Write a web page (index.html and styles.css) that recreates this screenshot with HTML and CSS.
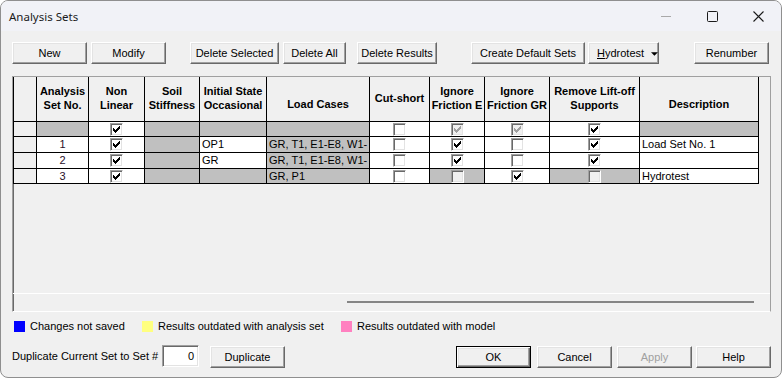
FILE: index.html
```html
<!DOCTYPE html>
<html>
<head>
<meta charset="utf-8">
<title>Analysis Sets</title>
<link rel="stylesheet" href="styles.css">
</head>
<body>
<div class="window">
  <div class="titlebar">
    <span class="title">Analysis Sets</span>
    <div class="controls">
      <span class="ctl"><svg width="10" height="10" viewBox="0 0 10 10"><path d="M0 5.5h10" stroke="#a9a9a9" stroke-width="1"/></svg></span>
      <span class="ctl"><svg width="11" height="11" viewBox="0 0 11 11"><rect x="0.5" y="0.5" width="10" height="10" rx="1" fill="none" stroke="#1b1b1b" stroke-width="1"/></svg></span>
      <span class="ctl"><svg width="11" height="11" viewBox="0 0 11 11"><path d="M0.5 0.5L10.5 10.5M10.5 0.5L0.5 10.5" stroke="#1b1b1b" stroke-width="1.1"/></svg></span>
    </div>
  </div>
  <div class="content">
    <div class="toolbar">
      <button class="btn w75">New</button>
      <button class="btn w75 ml4">Modify</button>
      <button class="btn w89 ml24">Delete Selected</button>
      <button class="btn w63 ml4">Delete All</button>
      <button class="btn w80 ml11">Delete Results</button>
      <button class="btn w114 ml34">Create Default Sets</button>
      <button class="btn w71 ml3 drop"><span><u>H</u>ydrotest</span><svg width="8" height="4" viewBox="0 0 8 4"><path d="M0 0h8L4 4z" fill="#000"/></svg></button>
      <button class="btn w75 ml35">Renumber</button>
    </div>

    <div class="frame">
      <div class="grid">
        <div class="row head">
          <div class="cell c0"></div>
          <div class="cell c1">Analysis<br>Set No.</div>
          <div class="cell c2">Non<br>Linear</div>
          <div class="cell c3">Soil<br>Stiffness</div>
          <div class="cell c4">Initial State<br>Occasional</div>
          <div class="cell c5 low">Load Cases</div>
          <div class="cell c6">Cut-short</div>
          <div class="cell c7">Ignore<br>Friction E</div>
          <div class="cell c8">Ignore<br>Friction GR</div>
          <div class="cell c9">Remove Lift-off<br>Supports</div>
          <div class="cell c10 low">Description</div>
        </div>

        <div class="row r15">
          <div class="cell c0 h"></div>
          <div class="cell c1 g"></div>
          <div class="cell c2 w ctr"><span class="cb"><svg width="11" height="11" viewBox="0 0 11 11"><path transform="translate(2 2)" d="M6 0h1v1h-1zM5 1h2v1h-2zM0 2h1v1h-1zM4 2h3v1h-3zM0 3h2v1h-2zM3 3h3v1h-3zM0 4h5v1h-5zM1 5h3v1h-3zM2 6h1v1h-1z"/></svg></span></div>
          <div class="cell c3 g"></div>
          <div class="cell c4 g"></div>
          <div class="cell c5 g"></div>
          <div class="cell c6 w ctr"><span class="cb"></span></div>
          <div class="cell c7 w ctr"><span class="cb dis"><svg width="11" height="11" viewBox="0 0 11 11"><path transform="translate(2 2)" d="M6 0h1v1h-1zM5 1h2v1h-2zM0 2h1v1h-1zM4 2h3v1h-3zM0 3h2v1h-2zM3 3h3v1h-3zM0 4h5v1h-5zM1 5h3v1h-3zM2 6h1v1h-1z"/></svg></span></div>
          <div class="cell c8 w ctr"><span class="cb dis"><svg width="11" height="11" viewBox="0 0 11 11"><path transform="translate(2 2)" d="M6 0h1v1h-1zM5 1h2v1h-2zM0 2h1v1h-1zM4 2h3v1h-3zM0 3h2v1h-2zM3 3h3v1h-3zM0 4h5v1h-5zM1 5h3v1h-3zM2 6h1v1h-1z"/></svg></span></div>
          <div class="cell c9 w ctr"><span class="cb"><svg width="11" height="11" viewBox="0 0 11 11"><path transform="translate(2 2)" d="M6 0h1v1h-1zM5 1h2v1h-2zM0 2h1v1h-1zM4 2h3v1h-3zM0 3h2v1h-2zM3 3h3v1h-3zM0 4h5v1h-5zM1 5h3v1h-3zM2 6h1v1h-1z"/></svg></span></div>
          <div class="cell c10 g"></div>
        </div>

        <div class="row r16">
          <div class="cell c0 h"></div>
          <div class="cell c1 w num">1</div>
          <div class="cell c2 w ctr"><span class="cb"><svg width="11" height="11" viewBox="0 0 11 11"><path transform="translate(2 2)" d="M6 0h1v1h-1zM5 1h2v1h-2zM0 2h1v1h-1zM4 2h3v1h-3zM0 3h2v1h-2zM3 3h3v1h-3zM0 4h5v1h-5zM1 5h3v1h-3zM2 6h1v1h-1z"/></svg></span></div>
          <div class="cell c3 g"></div>
          <div class="cell c4 w txt">OP1</div>
          <div class="cell c5 g txt">GR, T1, E1-E8, W1-</div>
          <div class="cell c6 w ctr"><span class="cb"></span></div>
          <div class="cell c7 w ctr"><span class="cb"><svg width="11" height="11" viewBox="0 0 11 11"><path transform="translate(2 2)" d="M6 0h1v1h-1zM5 1h2v1h-2zM0 2h1v1h-1zM4 2h3v1h-3zM0 3h2v1h-2zM3 3h3v1h-3zM0 4h5v1h-5zM1 5h3v1h-3zM2 6h1v1h-1z"/></svg></span></div>
          <div class="cell c8 w ctr"><span class="cb"></span></div>
          <div class="cell c9 w ctr"><span class="cb"><svg width="11" height="11" viewBox="0 0 11 11"><path transform="translate(2 2)" d="M6 0h1v1h-1zM5 1h2v1h-2zM0 2h1v1h-1zM4 2h3v1h-3zM0 3h2v1h-2zM3 3h3v1h-3zM0 4h5v1h-5zM1 5h3v1h-3zM2 6h1v1h-1z"/></svg></span></div>
          <div class="cell c10 w txt">Load Set No. 1</div>
        </div>

        <div class="row r16">
          <div class="cell c0 h"></div>
          <div class="cell c1 w num">2</div>
          <div class="cell c2 w ctr"><span class="cb"><svg width="11" height="11" viewBox="0 0 11 11"><path transform="translate(2 2)" d="M6 0h1v1h-1zM5 1h2v1h-2zM0 2h1v1h-1zM4 2h3v1h-3zM0 3h2v1h-2zM3 3h3v1h-3zM0 4h5v1h-5zM1 5h3v1h-3zM2 6h1v1h-1z"/></svg></span></div>
          <div class="cell c3 g"></div>
          <div class="cell c4 w txt">GR</div>
          <div class="cell c5 g txt">GR, T1, E1-E8, W1-</div>
          <div class="cell c6 w ctr"><span class="cb"></span></div>
          <div class="cell c7 w ctr"><span class="cb"><svg width="11" height="11" viewBox="0 0 11 11"><path transform="translate(2 2)" d="M6 0h1v1h-1zM5 1h2v1h-2zM0 2h1v1h-1zM4 2h3v1h-3zM0 3h2v1h-2zM3 3h3v1h-3zM0 4h5v1h-5zM1 5h3v1h-3zM2 6h1v1h-1z"/></svg></span></div>
          <div class="cell c8 w ctr"><span class="cb"></span></div>
          <div class="cell c9 w ctr"><span class="cb"><svg width="11" height="11" viewBox="0 0 11 11"><path transform="translate(2 2)" d="M6 0h1v1h-1zM5 1h2v1h-2zM0 2h1v1h-1zM4 2h3v1h-3zM0 3h2v1h-2zM3 3h3v1h-3zM0 4h5v1h-5zM1 5h3v1h-3zM2 6h1v1h-1z"/></svg></span></div>
          <div class="cell c10 w txt"></div>
        </div>

        <div class="row r15">
          <div class="cell c0 h"></div>
          <div class="cell c1 w num">3</div>
          <div class="cell c2 w ctr"><span class="cb"><svg width="11" height="11" viewBox="0 0 11 11"><path transform="translate(2 2)" d="M6 0h1v1h-1zM5 1h2v1h-2zM0 2h1v1h-1zM4 2h3v1h-3zM0 3h2v1h-2zM3 3h3v1h-3zM0 4h5v1h-5zM1 5h3v1h-3zM2 6h1v1h-1z"/></svg></span></div>
          <div class="cell c3 g"></div>
          <div class="cell c4 g"></div>
          <div class="cell c5 g txt">GR, P1</div>
          <div class="cell c6 w ctr"><span class="cb"></span></div>
          <div class="cell c7 g ctr"><span class="cb dis"></span></div>
          <div class="cell c8 w ctr"><span class="cb"><svg width="11" height="11" viewBox="0 0 11 11"><path transform="translate(2 2)" d="M6 0h1v1h-1zM5 1h2v1h-2zM0 2h1v1h-1zM4 2h3v1h-3zM0 3h2v1h-2zM3 3h3v1h-3zM0 4h5v1h-5zM1 5h3v1h-3zM2 6h1v1h-1z"/></svg></span></div>
          <div class="cell c9 g ctr"><span class="cb dis"></span></div>
          <div class="cell c10 w txt">Hydrotest</div>
        </div>
      </div>
      <div class="spacer"></div>
      <div class="hscroll"><div class="thumb"></div></div>
    </div>

    <div class="legend">
      <span class="sw blue"></span><span class="lt lt1">Changes not saved</span>
      <span class="sw yellow"></span><span class="lt lt2">Results outdated with analysis set</span>
      <span class="sw pink"></span><span class="lt">Results outdated with model</span>
    </div>

    <div class="bottom">
      <span class="dup-label">Duplicate Current Set to Set #</span>
      <span class="input">0</span>
      <button class="btn w75 ml11 mt1">Duplicate</button>
      <button class="btn w75 def ok mt1">OK</button>
      <button class="btn w75 ml6 mt1">Cancel</button>
      <button class="btn w75 ml5 mt1 disabled">Apply</button>
      <button class="btn w75 ml4 mt1">Help</button>
    </div>
  </div>
</div>
</body>
</html>
```

FILE: styles.css
```css
* { box-sizing: border-box; }

body {
  margin: 0;
  background: #ffffff;
  font-family: "Liberation Sans", Arial, sans-serif;
  font-size: 11px;
  color: #000;
}

.window {
  width: 782px;
  height: 378px;
  border: 1px solid #8f8f8f;
  border-radius: 8px;
  background: #f0f0f0;
  overflow: hidden;
  display: flex;
  flex-direction: column;
}

.titlebar {
  height: 30px;
  flex: none;
  background: #f1f2f7;
  display: flex;
  align-items: center;
  padding-left: 8px;
}

.title {
  font-family: "Noto Sans", "Open Sans", sans-serif;
  font-size: 11.5px;
  color: #1a1a1a;
  flex: 1;
}

.controls {
  display: flex;
  height: 100%;
}

.ctl {
  width: 46px;
  height: 100%;
  display: flex;
  align-items: center;
  justify-content: center;
}

.content {
  padding: 11px 0 0 11px;
  flex: 1;
}

.toolbar {
  display: flex;
  height: 22px;
}

.btn {
  font-family: "Liberation Sans", Arial, sans-serif;
  font-size: 11px;
  color: #000;
  height: 22px;
  padding: 0;
  margin: 0;
  background: #f0f0f0;
  border: 1px solid;
  border-color: #ffffff #696969 #696969 #ffffff;
  box-shadow: inset -1px -1px 0 #a0a0a0, inset 1px 1px 0 #e3e3e3;
  display: flex;
  align-items: center;
  justify-content: center;
  flex: none;
}

.btn.def {
  border: 1px solid #000;
  box-shadow: inset 1px 1px 0 #ffffff, inset -1px -1px 0 #696969, inset -2px -2px 0 #a0a0a0, inset 2px 2px 0 #e3e3e3;
}

.btn.disabled { color: #a0a0a0; }

.btn.drop {
  justify-content: flex-start;
  padding-left: 8px;
  gap: 7px;
}
.btn.drop svg { margin-top: 1px; }

.w63 { width: 63px; }
.w71 { width: 71px; }
.w75 { width: 75px; }
.w80 { width: 80px; }
.w89 { width: 89px; }
.w114 { width: 114px; }
.ml3 { margin-left: 3px; }
.ml4 { margin-left: 4px; }
.ml5 { margin-left: 5px; }
.ml6 { margin-left: 6px; }
.ml11 { margin-left: 11px; }
.ml24 { margin-left: 24px; }
.ml34 { margin-left: 34px; }
.ml35 { margin-left: 35px; }
.mt1 { margin-top: 1px; }

.frame {
  margin-top: 12px;
  width: 759px;
  height: 236px;
  border-top: 1px solid #a0a0a0;
  border-left: 1px solid #a0a0a0;
  border-right: 1px solid #a0a0a0;
  border-bottom: 1px solid #ffffff;
  box-shadow: inset 1px 0 0 #696969;
  display: flex;
  flex-direction: column;
}

.grid { flex: none; }

.row {
  display: flex;
}

.cell {
  flex: none;
  border-right: 1px solid #000;
  border-bottom: 1px solid #000;
  overflow: hidden;
  white-space: nowrap;
}

.head .cell {
  height: 45px;
  background: #f0f0f0;
  font-weight: bold;
  text-align: center;
  line-height: 14px;
  display: flex;
  align-items: center;
  justify-content: center;
  padding-bottom: 2px;
}
.head .cell.low { padding-top: 12px; }

.r15 .cell { height: 15px; }
.r16 .cell { height: 16px; }

.c0 { width: 24px; border-left: 1px solid #000; }
.c1 { width: 52px; }
.c2 { width: 56px; }
.c3 { width: 55px; }
.c4 { width: 67px; }
.c5 { width: 103px; }
.c6 { width: 60px; }
.c7 { width: 55px; }
.c8 { width: 65px; }
.c9 { width: 90px; }
.c10 { width: 119px; }

.h { background: #f0f0f0; }
.g { background: #c0c0c0; }
.w { background: #ffffff; }

.ctr {
  display: flex;
  align-items: center;
  justify-content: center;
}

.num {
  text-align: center;
  line-height: 14px;
  color: #2a0f2a;
}

.txt {
  padding-left: 2px;
  line-height: 14px;
}

.cb {
  display: block;
  width: 13px;
  height: 13px;
  border: 1px solid;
  border-color: #a0a0a0 #ffffff #ffffff #a0a0a0;
  box-shadow: inset 1px 1px 0 #696969, inset -1px -1px 0 #e3e3e3;
  background: #ffffff;
}
.cb svg { display: block; fill: #000; }
.cb.dis { background: #f0f0f0; }
.cb.dis svg { fill: #a0a0a0; }

.spacer { flex: 1; }

.hscroll {
  height: 18px;
  border-top: 1px solid #ffffff;
  padding-top: 7px;
  flex: none;
}

.thumb {
  margin-left: 334px;
  width: 407px;
  height: 2px;
  background: #858585;
}

.legend {
  margin-top: 8px;
  height: 13px;
  display: flex;
  align-items: center;
  padding-left: 2px;
}

.sw {
  width: 11px;
  height: 11px;
  flex: none;
}
.blue { background: #0000ff; }
.yellow { background: #ffff80; }
.pink { background: #ff80c0; }

.lt { margin-left: 5px; line-height: 13px; }
.lt1 { width: 112px; }
.lt2 { width: 183px; }

.bottom {
  margin-top: 12px;
  display: flex;
  align-items: flex-start;
  height: 23px;
}

.dup-label {
  width: 150px;
  line-height: 22px;
  flex: none;
}

.input {
  width: 37px;
  height: 22px;
  flex: none;
  background: #ffffff;
  border: 1px solid;
  border-color: #a0a0a0 #ffffff #ffffff #a0a0a0;
  box-shadow: inset 1px 1px 0 #696969, inset -1px -1px 0 #e3e3e3;
  text-align: right;
  padding-right: 4px;
  line-height: 20px;
}

.ok { margin-left: 171px; }
```
